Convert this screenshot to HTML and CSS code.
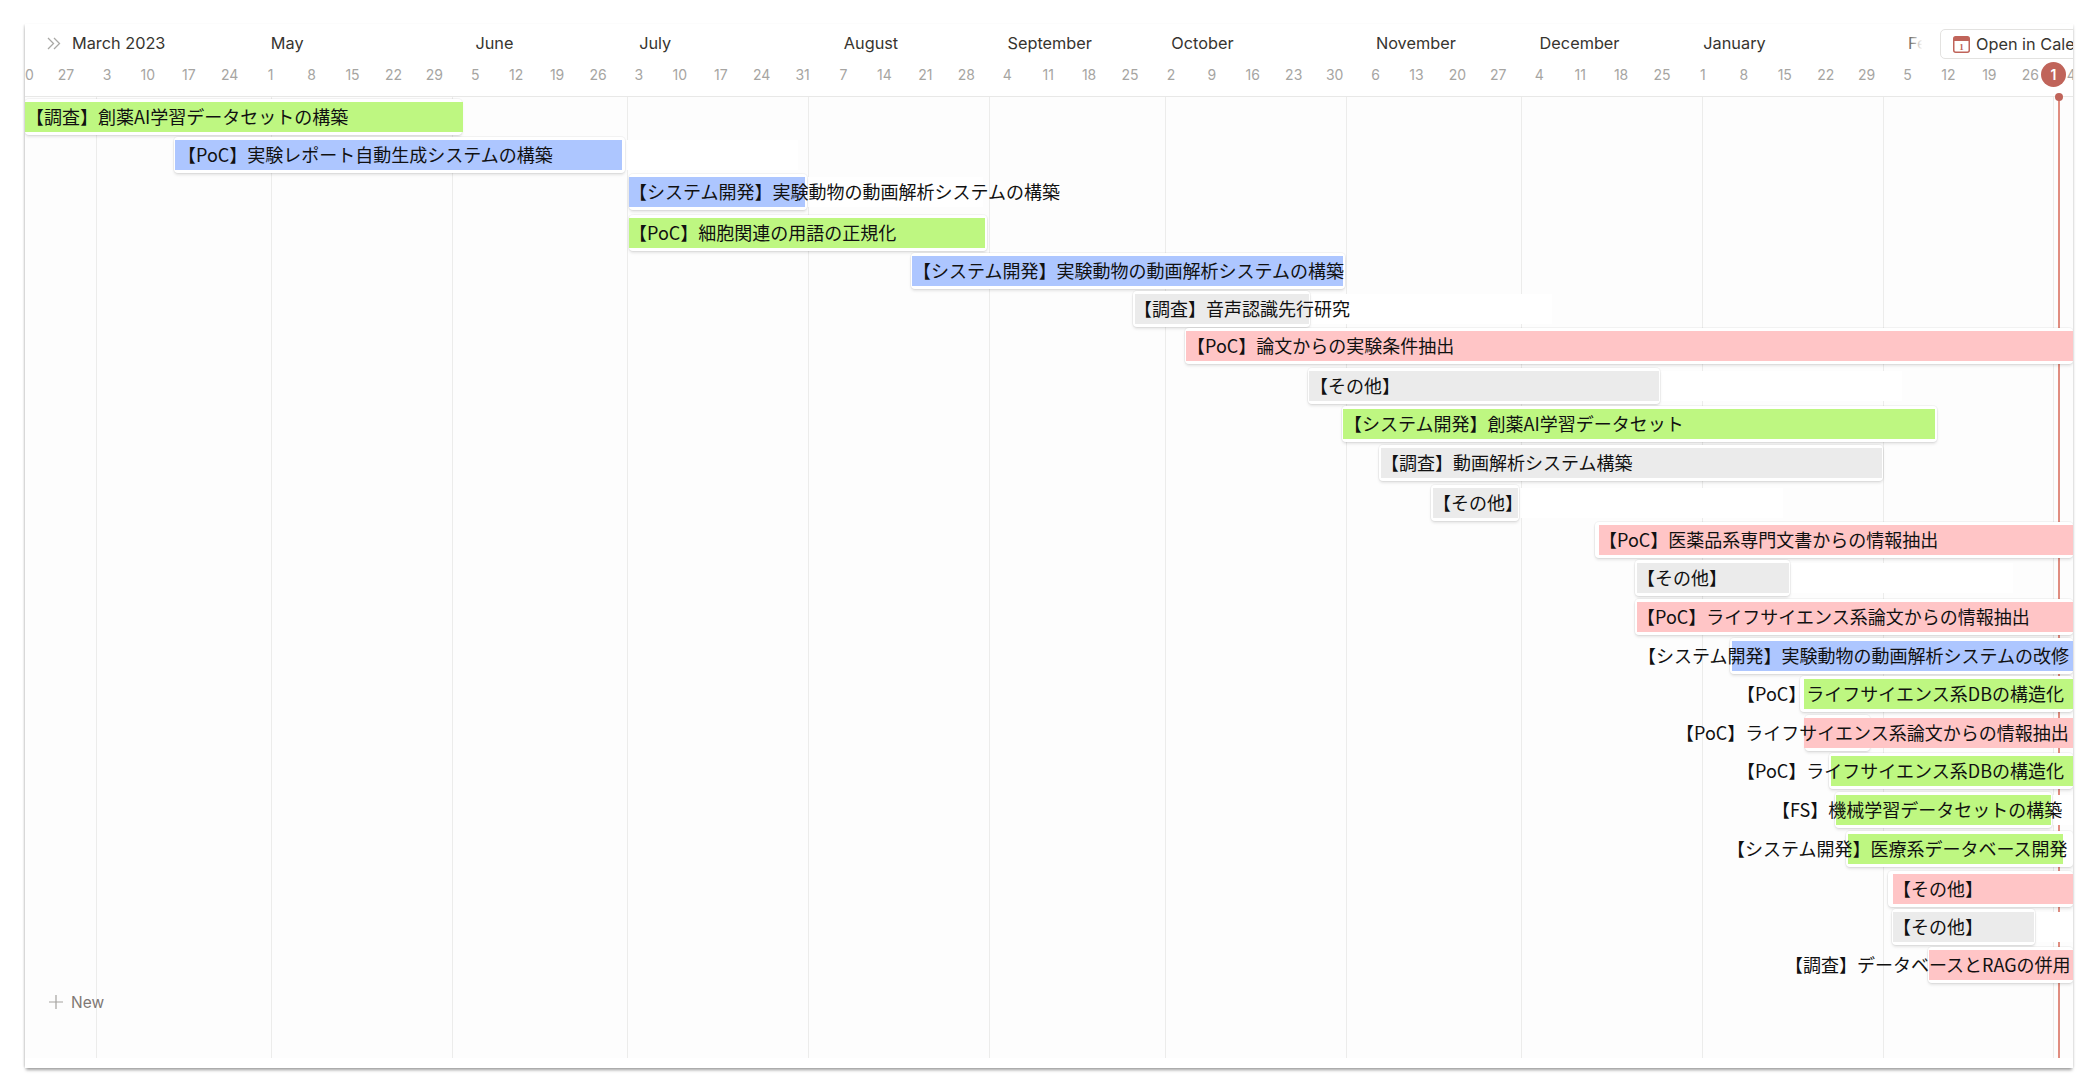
FILE: index.html
```html
<!DOCTYPE html>
<html lang="ja">
<head>
  <meta charset="UTF-8">
  <title>Timeline</title>
  <link rel="stylesheet" href="styles.css">
</head>
<body>
  <div class="panel">
    <div class="header">
      <div class="months">
        <div class="month first">
          <svg class="chevrons" width="14" height="13" viewBox="0 0 14 13"><path d="M1 1l5.5 5.5L1 12M7 1l5.5 5.5L7 12" fill="none" stroke="#a9a8a5" stroke-width="1.3"/></svg>
          March 2023
        </div>
        <div class="month w5">May</div>
        <div class="month w4">June</div>
        <div class="month w5">July</div>
        <div class="month w4">August</div>
        <div class="month w4">September</div>
        <div class="month w5">October</div>
        <div class="month w4">November</div>
        <div class="month w4">December</div>
        <div class="month w5">January</div>
        <div class="month w4">Feb</div>
      </div>
      <div class="days">
        <span>20</span><span>27</span><span>3</span><span>10</span><span>17</span><span>24</span><span>1</span><span>8</span><span>15</span><span>22</span><span>29</span><span>5</span><span>12</span><span>19</span><span>26</span><span>3</span><span>10</span><span>17</span><span>24</span><span>31</span><span>7</span><span>14</span><span>21</span><span>28</span><span>4</span><span>11</span><span>18</span><span>25</span><span>2</span><span>9</span><span>16</span><span>23</span><span>30</span><span>6</span><span>13</span><span>20</span><span>27</span><span>4</span><span>11</span><span>18</span><span>25</span><span>1</span><span>8</span><span>15</span><span>22</span><span>29</span><span>5</span><span>12</span><span>19</span><span>26</span><span>4</span>
      </div>
    </div>

    <button class="open-calendar" type="button">
      <svg width="17" height="18" viewBox="0 0 17 18">
        <rect x="0.75" y="1.75" width="15.5" height="15.5" rx="2" fill="#fff" stroke="#c0645a" stroke-width="1.5"/>
        <path d="M1 3.5a2 2 0 0 1 2-2h11a2 2 0 0 1 2 2V6H1z" fill="#c0645a"/>
        <text x="8.5" y="15" font-size="9" font-weight="700" text-anchor="middle" fill="#c0645a" font-family="Liberation Serif, serif">1</text>
      </svg>
      Open in Calendar
    </button>
    <div class="today-badge">1</div>

    <div class="chart">
      <div class="grid-lines">
        <div class="spacer"></div>
        <div class="col m30"></div><div class="col m31"></div><div class="col m30"></div><div class="col m31"></div><div class="col m31"></div><div class="col m30"></div><div class="col m31"></div><div class="col m30"></div><div class="col m31"></div><div class="col m31"></div><div class="col m29"></div><div class="col m31"></div>
      </div>
      <div class="today-line"></div>

      <div class="rows">
        <div class="row" style="height:38px">
          <div class="card" style="margin-left:0;width:437px"></div>
          <div class="fill green" style="margin-left:0;width:438px"></div>
          <span class="label" style="margin-left:1px">【調査】創薬AI学習データセットの構築</span>
        </div>
        <div class="row" style="height:37px">
          <div class="strip" style="margin-left:597px;width:176px"></div>
          <div class="card" style="margin-left:149px;width:451px"></div>
          <div class="fill blue" style="margin-left:150px;width:447px"></div>
          <span class="label" style="margin-left:153px">【PoC】実験レポート自動生成システムの構築</span>
        </div>
        <div class="row" style="height:41px">
          <div class="strip" style="margin-left:780px;width:178px"></div>
          <div class="card" style="margin-left:604px;width:178px"></div>
          <div class="fill blue" style="margin-left:604px;width:176px"></div>
          <span class="label" style="margin-left:604px">【システム開発】実験動物の動画解析システムの構築</span>
        </div>
        <div class="row" style="height:38px">
          <div class="card" style="margin-left:604px;width:358px"></div>
          <div class="fill green" style="margin-left:604px;width:356px"></div>
          <span class="label" style="margin-left:604px">【PoC】細胞関連の用語の正規化</span>
        </div>
        <div class="row" style="height:38px">
          <div class="card" style="margin-left:886px;width:434px"></div>
          <div class="fill blue" style="margin-left:887px;width:431px"></div>
          <span class="label" style="margin-left:888px">【システム開発】実験動物の動画解析システムの構築</span>
        </div>
        <div class="row" style="height:37px">
          <div class="strip" style="margin-left:1284px;width:243px"></div>
          <div class="card" style="margin-left:1108px;width:177px"></div>
          <div class="fill gray" style="margin-left:1110px;width:174px"></div>
          <span class="label" style="margin-left:1109px">【調査】音声認識先行研究</span>
        </div>
        <div class="row" style="height:40px">
          <div class="card" style="margin-left:1160px;width:888px"></div>
          <div class="fill pink" style="margin-left:1161px;width:887px"></div>
          <span class="label" style="margin-left:1162px">【PoC】論文からの実験条件抽出</span>
        </div>
        <div class="row" style="height:38px">
          <div class="strip" style="margin-left:1634px;width:243px"></div>
          <div class="card" style="margin-left:1283px;width:352px"></div>
          <div class="fill gray" style="margin-left:1284px;width:350px"></div>
          <span class="label" style="margin-left:1285px">【その他】</span>
        </div>
        <div class="row" style="height:39px">
          <div class="card" style="margin-left:1317px;width:595px"></div>
          <div class="fill green" style="margin-left:1318px;width:592px"></div>
          <span class="label" style="margin-left:1319px">【システム開発】創薬AI学習データセット</span>
        </div>
        <div class="row" style="height:40px">
          <div class="card" style="margin-left:1354px;width:504px"></div>
          <div class="fill gray" style="margin-left:1356px;width:501px"></div>
          <span class="label" style="margin-left:1356px">【調査】動画解析システム構築</span>
        </div>
        <div class="row" style="height:37px">
          <div class="strip" style="margin-left:1493px;width:265px"></div>
          <div class="card" style="margin-left:1406px;width:88px"></div>
          <div class="fill gray" style="margin-left:1408px;width:85px"></div>
          <span class="label" style="margin-left:1408px">【その他】</span>
        </div>
        <div class="row" style="height:38px">
          <div class="card" style="margin-left:1570px;width:478px"></div>
          <div class="fill pink" style="margin-left:1574px;width:474px"></div>
          <span class="label" style="margin-left:1574px">【PoC】医薬品系専門文書からの情報抽出</span>
        </div>
        <div class="row" style="height:39px">
          <div class="strip" style="margin-left:1764px;width:224px"></div>
          <div class="card" style="margin-left:1610px;width:155px"></div>
          <div class="fill gray" style="margin-left:1612px;width:152px"></div>
          <span class="label" style="margin-left:1612px">【その他】</span>
        </div>
        <div class="row" style="height:39px">
          <div class="card" style="margin-left:1610px;width:438px"></div>
          <div class="fill pink" style="margin-left:1612px;width:436px"></div>
          <span class="label" style="margin-left:1612px">【PoC】ライフサイエンス系論文からの情報抽出</span>
        </div>
        <div class="row" style="height:38px">
          <div class="card" style="margin-left:1705px;width:343px"></div>
          <div class="fill blue" style="margin-left:1707px;width:341px"></div>
          <span class="label" style="margin-left:1613px">【システム開発】実験動物の動画解析システムの改修</span>
        </div>
        <div class="row" style="height:39px">
          <div class="card" style="margin-left:1775px;width:273px"></div>
          <div class="fill green" style="margin-left:1779px;width:269px"></div>
          <span class="label" style="margin-left:1712px">【PoC】ライフサイエンス系DBの構造化</span>
        </div>
        <div class="row" style="height:38px">
          <div class="card" style="margin-left:1780px;width:65px"></div>
          <div class="fill pink" style="margin-left:1779px;width:269px"></div>
          <span class="label" style="margin-left:1651px">【PoC】ライフサイエンス系論文からの情報抽出</span>
        </div>
        <div class="row" style="height:39px">
          <div class="card" style="margin-left:1804px;width:244px"></div>
          <div class="fill green" style="margin-left:1806px;width:242px"></div>
          <span class="label" style="margin-left:1712px">【PoC】ライフサイエンス系DBの構造化</span>
        </div>
        <div class="row" style="height:39px">
          <div class="strip" style="margin-left:2027px;width:21px"></div>
          <div class="card" style="margin-left:1810px;width:217px"></div>
          <div class="fill green" style="margin-left:1811px;width:215px"></div>
          <span class="label" style="margin-left:1747px">【FS】機械学習データセットの構築</span>
        </div>
        <div class="row" style="height:40px">
          <div class="card" style="margin-left:1821px;width:227px"></div>
          <div class="fill green" style="margin-left:1823px;width:215px"></div>
          <span class="label" style="margin-left:1702px">【システム開発】医療系データベース開発</span>
        </div>
        <div class="row" style="height:38px">
          <div class="card" style="margin-left:1863px;width:185px"></div>
          <div class="fill pink" style="margin-left:1868px;width:180px"></div>
          <span class="label" style="margin-left:1868px">【その他】</span>
        </div>
        <div class="row" style="height:38px">
          <div class="strip" style="margin-left:2009px;width:39px"></div>
          <div class="card" style="margin-left:1867px;width:143px"></div>
          <div class="fill gray" style="margin-left:1868px;width:141px"></div>
          <span class="label" style="margin-left:1868px">【その他】</span>
        </div>
        <div class="row" style="height:37px">
          <div class="card" style="margin-left:1903px;width:145px"></div>
          <div class="fill pink" style="margin-left:1904px;width:144px"></div>
          <span class="label" style="margin-left:1760px">【調査】データベースとRAGの併用</span>
        </div>

        <div class="new-row">
          <svg width="14" height="14" viewBox="0 0 14 14"><path d="M7 0v14M0 7h14" stroke="#a5a3a0" stroke-width="1.2"/></svg>
          New
        </div>
      </div>
    </div>
  </div>
</body>
</html>
```

FILE: styles.css
```css
body {
  margin: 0;
  height: 1089px;
  overflow: hidden;
  box-sizing: border-box;
  padding: 24px 14px 0 25px;
  background-color: #fff;
  font-family: Inter, 'Noto Sans CJK JP', sans-serif;
}

.panel {
  position: relative;
  height: 1044px;
  display: flex;
  flex-direction: column;
  padding-bottom: 10px;
  box-sizing: border-box;
  overflow: hidden;
  background: #fff;
  box-shadow: 0 3px 3px -1px rgba(0,0,0,0.38), -2px 0 2px -1px rgba(0,0,0,0.14), 2px 0 2px -1px rgba(0,0,0,0.07);
}

.header {
  height: 73px;
  flex: none;
  box-sizing: border-box;
  border-bottom: 1px solid #e8e8e7;
}

.months {
  display: flex;
  padding-top: 7px;
  height: 24px;
  line-height: 24px;
  font-size: 16.3px;
  color: #37352f;
  white-space: nowrap;
}

.month {
  flex: none;
}

.month.first {
  width: 245.8px;
  padding-left: 22px;
  box-sizing: border-box;
  display: flex;
  align-items: center;
  gap: 11px;
}

.w4 { width: 163.72px; }
.w5 { width: 204.65px; }

.days {
  display: flex;
  margin-top: 8px;
  margin-left: -20.35px;
  height: 24px;
  line-height: 24px;
  font-size: 14px;
  color: #a6a5a2;
}

.days span {
  flex: none;
  width: 40.93px;
  text-align: center;
}

.open-calendar {
  position: absolute;
  left: 1915px;
  top: 5px;
  width: 180px;
  height: 30px;
  padding: 0 0 0 12px;
  display: flex;
  align-items: center;
  gap: 6px;
  background: #fff;
  border: 1px solid #e3e2e0;
  border-radius: 5px;
  font-family: inherit;
  font-size: 16.3px;
  color: #37352f;
  white-space: nowrap;
}

.open-calendar::before {
  content: "";
  position: absolute;
  left: -36px;
  top: 0;
  width: 35px;
  height: 100%;
  background: linear-gradient(to right, rgba(255,255,255,0), #fff 50%);
}

.today-badge {
  position: absolute;
  left: 2016px;
  top: 38px;
  width: 25px;
  height: 25px;
  line-height: 25px;
  border-radius: 50%;
  background: #c0645a;
  color: #fff;
  font-size: 14px;
  font-weight: 600;
  text-align: center;
}

.chart {
  position: relative;
  flex: 1;
  display: grid;
  background: #fdfdfd;
}

.grid-lines,
.rows {
  grid-area: 1 / 1;
  min-width: 0;
}

.grid-lines {
  display: flex;
}

.spacer {
  flex: none;
  width: 70.5px;
}

.col {
  flex: none;
  box-sizing: border-box;
  border-left: 1px solid #ececeb;
}

.m29 { width: 169.4px; }
.m30 { width: 175.3px; }
.m31 { width: 181.1px; }

.today-line {
  position: absolute;
  left: 2033px;
  top: 0;
  bottom: 0;
  width: 2px;
  background: #e08d80;
}

.today-line::before {
  content: "";
  position: absolute;
  left: -3px;
  top: -4px;
  width: 8px;
  height: 8px;
  border-radius: 50%;
  background: #c0645a;
}

.rows {
  position: relative;
  padding-top: 5px;
}

.row {
  display: grid;
  grid-template-columns: 1fr;
  grid-template-rows: 30px;
}

.row > * {
  grid-area: 1 / 1;
  justify-self: start;
  align-self: start;
}

.strip {
  height: 30px;
  background: #fff;
}

.card {
  height: 36px;
  margin-top: -3px;
  border-radius: 4px;
  background: #fff;
  box-shadow: 0 0 0 1px rgba(0,0,0,0.04), 0 2px 3px rgba(0,0,0,0.1);
}

.fill {
  height: 30px;
}

.green { background: #bef781; }
.blue { background: #adc6ff; }
.pink { background: #ffc5c6; }
.gray { background: #ebebeb; }

.label {
  line-height: 28px;
  font-size: 18px;
  color: #111;
  white-space: nowrap;
  font-family: 'Noto Sans CJK JP', sans-serif;
}

.new-row {
  display: flex;
  align-items: center;
  gap: 8px;
  height: 30px;
  padding-left: 24px;
  font-size: 15.5px;
  color: #7f7874;
}
```
